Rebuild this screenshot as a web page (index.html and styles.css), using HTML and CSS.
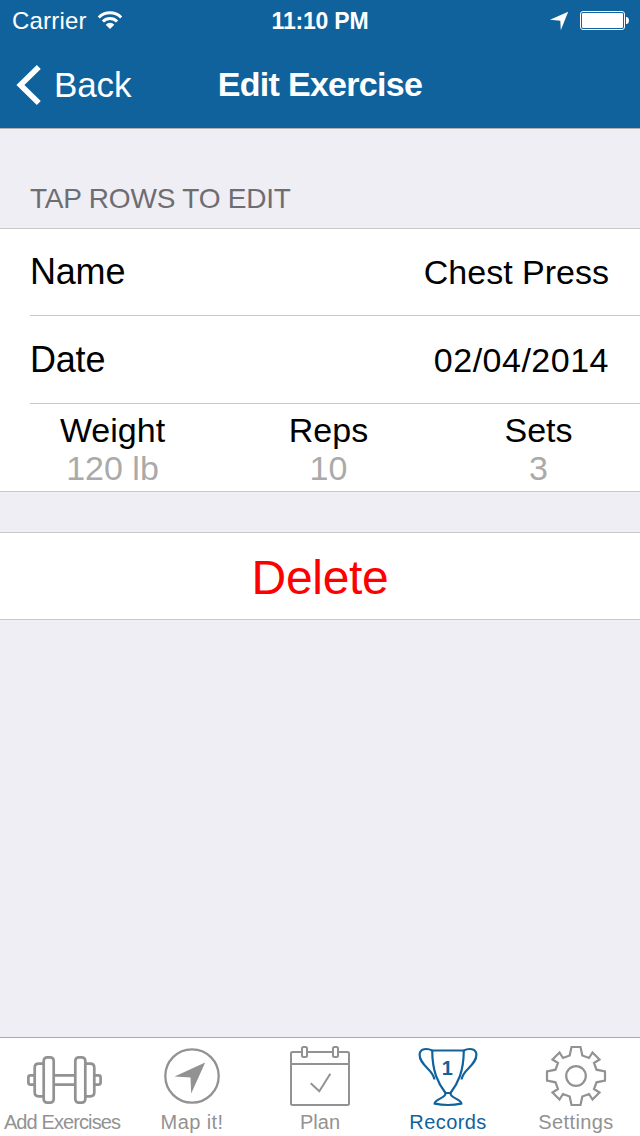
FILE: index.html
```html
<!DOCTYPE html>
<html lang="en">
<head>
<meta charset="utf-8">
<title>Edit Exercise</title>
<link rel="stylesheet" href="styles.css">
</head>
<body>
<div class="screen">
  <header class="header">
    <div class="status">
      <div class="status-left">
        <span class="carrier">Carrier</span>
        <svg class="wifi" width="26" height="20" viewBox="97.5 10 26 20">
          <g fill="none" stroke="#fff" stroke-width="3">
            <path d="M99.3 17.5A15.8 15.8 0 0 1 121.7 17.5"/>
            <path d="M103.4 21.5A10 10 0 0 1 117.6 21.5"/>
          </g>
          <path fill="#fff" d="M110.5 29L106.2 24.7A5.8 5.8 0 0 1 114.8 24.7Z"/>
        </svg>
      </div>
      <span class="time">11:10 PM</span>
      <svg class="status-right" width="82" height="20" viewBox="548 11 82 20">
        <path fill="#fff" d="M568.2 11.8L560.8 30.2L560.3 20.7L550 19.8Z"/>
        <rect x="580.5" y="11.5" width="44" height="18" rx="2.5" fill="none" stroke="#fff"/>
        <rect x="582" y="13" width="41" height="15" rx="1.2" fill="#fff"/>
        <path fill="#fff" d="M626 17H627Q629 17.6 629 20.5T627 24H626Z"/>
      </svg>
    </div>
    <nav class="nav">
      <a class="back">
        <svg width="26" height="42" viewBox="16 63.5 26 42"><path d="M38.8 66.4L20.4 84.5L38.8 102.6" fill="none" stroke="#fff" stroke-width="5.6"/></svg>
        <span class="back-text">Back</span>
      </a>
      <h1 class="title">Edit Exercise</h1>
    </nav>
  </header>
  <main class="content">
    <h2 class="section-title">TAP ROWS TO EDIT</h2>
    <section class="group">
      <div class="row"><span class="label">Name</span><span class="value">Chest Press</span></div>
      <div class="row"><span class="label">Date</span><span class="value date">02/04/2014</span></div>
      <div class="stats">
        <div class="stat"><span>Weight</span><span class="amount">120 lb</span></div>
        <div class="stat"><span>Reps</span><span class="amount">10</span></div>
        <div class="stat last"><span>Sets</span><span class="amount">3</span></div>
      </div>
    </section>
    <section class="group action"><span class="delete">Delete</span></section>
  </main>
  <footer class="tabs">
    <div class="tab">
      <svg class="icon" viewBox="0 1038 128 72">
        <g fill="none" stroke="currentColor" stroke-width="2.7">
          <rect x="43.7" y="1057.3" width="10" height="45.4" rx="3.5"/>
          <rect x="75.3" y="1057.3" width="10" height="45.4" rx="3.5"/>
          <path d="M43.7 1063.7H38.7Q34.7 1063.7 34.7 1067.7V1092.3Q34.7 1096.3 38.7 1096.3H43.7"/>
          <path d="M85.3 1063.7H90.3Q94.3 1063.7 94.3 1067.7V1092.3Q94.3 1096.3 90.3 1096.3H85.3"/>
          <path d="M34.7 1075.3H30.5Q28.4 1075.3 28.4 1077.4V1082.6Q28.4 1084.7 30.5 1084.7H34.7M94.3 1075.3H98.5Q100.6 1075.3 100.6 1077.4V1082.6Q100.6 1084.7 98.5 1084.7H94.3M53.7 1075.3H75.3M53.7 1084.7H75.3"/>
        </g>
      </svg>
      <span class="tab-text add">Add Exercises</span>
    </div>
    <div class="tab">
      <svg class="icon" viewBox="128 1038 128 72">
        <circle cx="192" cy="1076" r="26.7" fill="none" stroke="currentColor" stroke-width="2.3"/>
        <path fill="currentColor" d="M205.2 1062.5L191.2 1093.5L190.5 1077.4L174.5 1076.4Z"/>
      </svg>
      <span class="tab-text">Map it!</span>
    </div>
    <div class="tab">
      <svg class="icon" viewBox="256 1038 128 72">
        <g fill="none" stroke="currentColor" stroke-width="2">
          <path d="M301.5 1052H292.5Q291 1052 291 1053.5V1103.5Q291 1105 292.5 1105H347.5Q349 1105 349 1103.5V1053.5Q349 1052 347.5 1052H338.5M307.5 1052H332.5M291 1064H349"/>
          <rect x="302" y="1047" width="5" height="10" rx="1.5"/>
          <rect x="333" y="1047" width="5" height="10" rx="1.5"/>
          <path d="M310.7 1083.3L319.3 1091.3L330.3 1073.7"/>
        </g>
      </svg>
      <span class="tab-text plan">Plan</span>
    </div>
    <div class="tab active">
      <svg class="icon" viewBox="384 1038 128 72">
        <g fill="none" stroke="currentColor" stroke-width="2.2" stroke-linejoin="round">
          <path d="M432.2 1050.5H463.8C463.6 1072 458 1083 450.5 1093H445.5C438 1083 432.4 1072 432.2 1050.5Z"/>
          <path d="M432.2 1050.5C427 1047.8 419.8 1048.6 419.6 1054.5C419.4 1065.5 433.5 1069.5 434.4 1079.5"/>
          <path d="M463.8 1050.5C469 1047.8 476.2 1048.6 476.4 1054.5C476.6 1065.5 462.5 1069.5 461.6 1079.5"/>
          <path d="M445.5 1093C446.5 1098 434.6 1099 434.6 1103.7Q448 1106.3 461.4 1103.7C461.4 1099 449.5 1098 450.5 1093"/>
        </g>
        <text class="medal" x="447.2" y="1075.3" text-anchor="middle">1</text>
      </svg>
      <span class="tab-text">Records</span>
    </div>
    <div class="tab">
      <svg class="icon" viewBox="512 1038 128 72">
        <g transform="translate(576 1076)" fill="none" stroke="currentColor" stroke-width="2.2">
          <circle r="9.8"/>
          <path d="M-4.5-29H4.5L6.3-20.5L13-18L16.5-23.5L23.5-16.5L18-13L20.5-6.3L29-4.5V4.5L20.5 6.3L18 13L23.5 16.5L16.5 23.5L13 18L6.3 20.5L4.5 29H-4.5L-6.3 20.5L-13 18L-16.5 23.5L-23.5 16.5L-18 13L-20.5 6.3L-29 4.5V-4.5L-20.5-6.3L-18-13L-23.5-16.5L-16.5-23.5L-13-18L-6.3-20.5Z"/>
        </g>
      </svg>
      <span class="tab-text">Settings</span>
    </div>
  </footer>
</div>
</body>
</html>
```
FILE: styles.css
```css
* { box-sizing: border-box; }
body {
  margin: 0;
  font-family: "Liberation Sans", Arial, sans-serif;
  color: #000;
  background: #efeef4;
}
.screen { width: 640px; height: 1136px; display: flex; flex-direction: column; }
.header { height: 129px; background: #10629c; color: #fff; border-bottom: 1px solid #b0b0b0; }
.status { height: 41px; display: grid; grid-template-columns: 1fr auto 1fr; align-items: start; }
.status-left { display: flex; align-items: center; gap: 10px; padding-left: 12px; }
.carrier { font-size: 24px; line-height: 41px; letter-spacing: 0.2px; }
.wifi { margin-top: -1px; }
.time { font-size: 23px; line-height: 41px; padding-top: 1px; font-weight: bold; letter-spacing: -0.2px; }
.status-right { justify-self: end; margin: 11px 10px 0 0; }
.nav { height: 87px; display: grid; grid-template-columns: 1fr auto 1fr; align-items: center; }
.back { display: flex; align-items: center; gap: 12px; padding-left: 16px; }
.back-text { font-size: 35px; letter-spacing: -0.1px; }
.title { margin: 0; font-size: 34px; font-weight: bold; letter-spacing: -0.7px; }
.content { flex: 1; }
.section-title {
  margin: 0;
  padding: 51px 30px 11px;
  font-size: 28px;
  line-height: 37px;
  font-weight: normal;
  letter-spacing: -0.2px;
  color: #6d6d72;
}
.group { background: #fff; border-top: 1px solid #c8c7cc; border-bottom: 1px solid #c8c7cc; }
.row {
  height: 87px;
  margin-left: 30px;
  padding-right: 31px;
  display: flex;
  align-items: center;
  justify-content: space-between;
  border-bottom: 1px solid #c8c7cc;
}
.row + .row { height: 88px; }
.label { font-size: 36px; letter-spacing: -0.2px; }
.value { font-size: 34px; }
.date { padding-top: 1px; letter-spacing: 0.5px; }
.stats { height: 87px; padding-top: 7px; display: grid; grid-template-columns: 225px 207px 1fr; }
.stat { display: flex; flex-direction: column; align-items: center; font-size: 34px; line-height: 38px; }
.last { padding-left: 5px; }
.amount { color: #aaa; }
.action { height: 88px; margin-top: 40px; padding-top: 2px; display: flex; justify-content: center; align-items: center; }
.delete { font-size: 48px; letter-spacing: -0.3px; color: #f00; }
.tabs { height: 99px; background: #fff; border-top: 1px solid #a9a9ac; display: flex; color: #929292; }
.tab { width: 128px; display: flex; flex-direction: column; align-items: center; }
.active { color: #10629c; }
.icon { width: 128px; height: 72px; }
.tab-text { font-size: 20px; line-height: 24px; letter-spacing: 0.4px; white-space: nowrap; }
.add { letter-spacing: -0.9px; margin-right: 4px; }
.plan { letter-spacing: 0; }
.medal { font-size: 20px; font-weight: bold; fill: currentColor; }
```
